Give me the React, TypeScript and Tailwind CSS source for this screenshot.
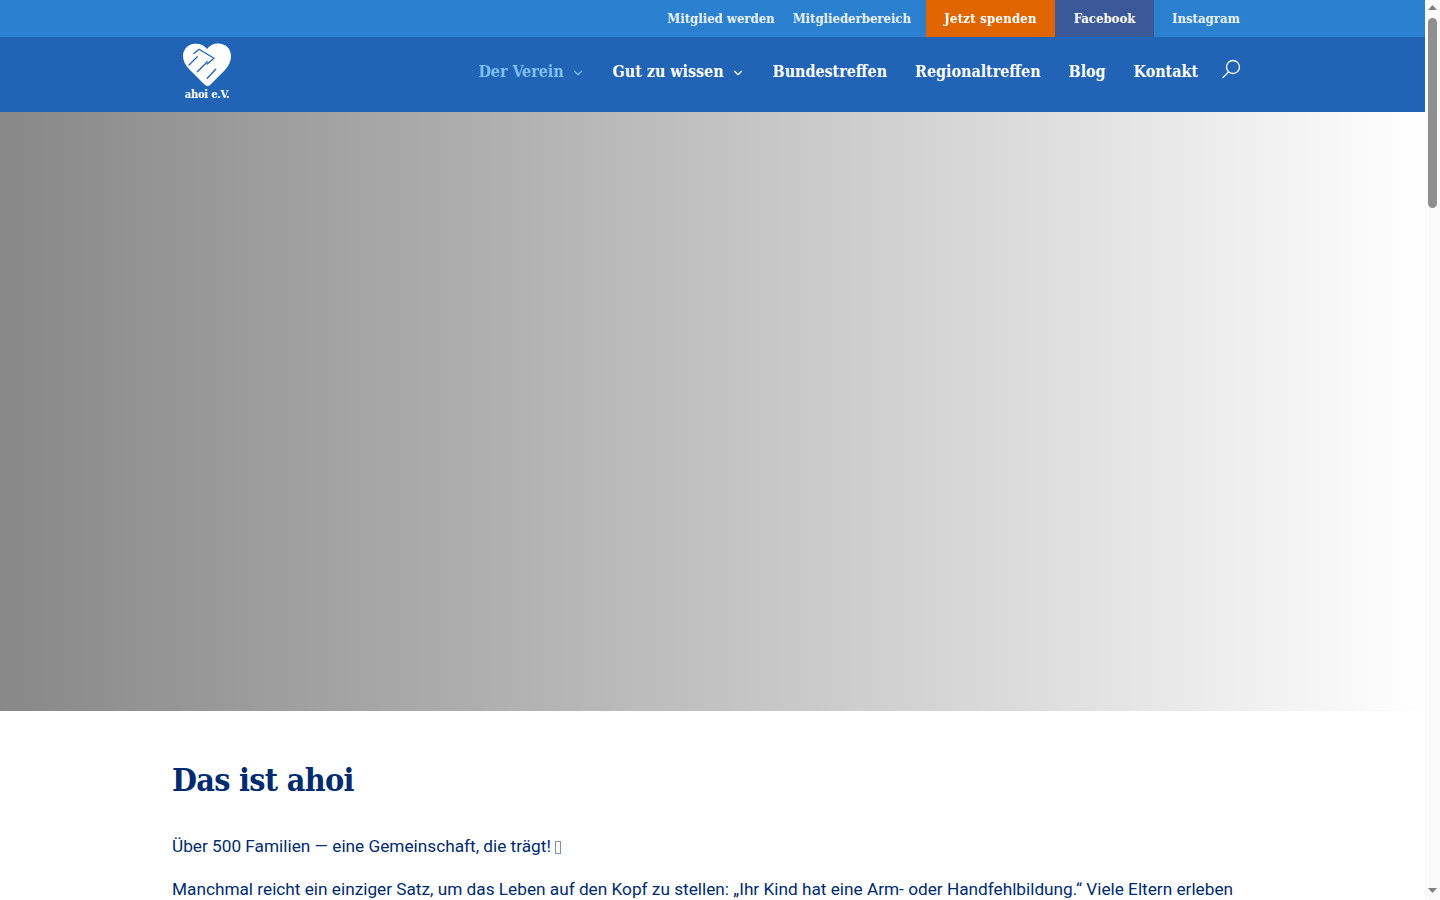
import { ChevronDown } from 'lucide-react'

const SLAB = "font-['DejaVu_Serif_Condensed','Liberation_Serif',serif]"

function Logo() {
  return (
    <div className="flex flex-col items-center w-[70px]">
      <svg viewBox="0 0 48 44" className="w-[48px] h-[44px]">
        <path
          fill="#fff"
          d="M24 6C21 1.500 15 0 9.500 1 3.500 2.500 0 7.500 0 13c0 5 2.500 9 6 13l15 15c2 2 4 3 6 1l14-14c4-4 7-9 7-15C48 6 43 1 36 .5 31 0 27 2 24 6z"
        />
        <g fill="none" stroke="#2163b5" strokeWidth="1.300" strokeLinecap="round" strokeLinejoin="round">
          <path d="M11 10.500l5-4.200 15 9-6.700 5.700" />
          <path d="M6 22l8.300-8.300" />
          <path d="M14.300 28.700l10-10" />
          <path d="M24.300 35.300l8.400-9" />
        </g>
      </svg>
      <span className={`${SLAB} mt-[1px] text-[11px] leading-[13px] text-white font-bold tracking-[-0.2px]`}>ahoi e.V.</span>
    </div>
  )
}

function TopLink({ label }: { label: string }) {
  return <a className="px-[9px] text-white/90 font-semibold">{label}</a>
}

function NavItem({ label, active, menu }: { label: string; active?: boolean; menu?: boolean }) {
  return (
    <a className={`flex items-center gap-[7px] ${active ? 'text-[#80c0f4]' : 'text-white'}`}>
      {label}
      {menu && <ChevronDown size={14} strokeWidth={2} className="mt-[1px]" />}
    </a>
  )
}

function Scrollbar() {
  return (
    <div className="w-[15px] h-full bg-[#fbfbfb] flex flex-col items-center">
      <svg viewBox="0 0 9 5" className="w-[9px] h-[5px] mt-[5px] shrink-0" fill="#7f7f7f">
        <path d="M4.500 0L9 5H0z" />
      </svg>
      <div className="w-[9px] h-[190px] mt-[8px] rounded-[5px] bg-[#8f8f8f]" />
      <svg viewBox="0 0 9 5" className="w-[9px] h-[5px] mt-auto mb-[7px] shrink-0" fill="#7f7f7f">
        <path d="M0 0h9L4.500 5z" />
      </svg>
    </div>
  )
}

export default function App() {
  return (
    <div className="h-[900px] flex overflow-hidden bg-white">
      <div className="flex-1 min-w-0">
        {/* Top bar */}
        <div className={`${SLAB} h-[37px] bg-[#2b80cf] flex items-center justify-end pr-[185px] text-[13px]`}>
          <TopLink label="Mitglied werden" />
          <TopLink label="Mitgliederbereich" />
          <a className="h-[37px] w-[129px] ml-[6px] flex items-center justify-center bg-[#e06500] text-white font-semibold tracking-[0.25px]">Jetzt spenden</a>
          <a className="h-[37px] w-[99px] flex items-center justify-center bg-[#3b5998] text-white font-semibold">Facebook</a>
          <a className="w-[86px] pl-[18px] text-white/90 font-semibold">Instagram</a>
        </div>

        {/* Main nav */}
        <div className="h-[75px] bg-[#2163b5] pl-[172px] pr-[185px] flex items-start justify-between">
          <div className="pt-[6px]"><Logo /></div>
          <nav className={`${SLAB} flex items-center gap-[28px] pt-[23px] text-[15.9px] font-semibold leading-[24px]`}>
            <NavItem label="Der Verein" active menu />
            <NavItem label="Gut zu wissen" menu />
            <NavItem label="Bundestreffen" />
            <NavItem label="Regionaltreffen" />
            <NavItem label="Blog" />
            <NavItem label="Kontakt" />
            <svg viewBox="0 0 20 20" className="w-[20px] h-[20px] -mt-[7px] -ml-[5px] -mr-[1px]" fill="none" stroke="#fff" strokeWidth="1.300">
              <circle cx="12" cy="8" r="6.500" />
              <path d="M7.500 13l-5.500 5.500" strokeLinecap="round" />
            </svg>
          </nav>
        </div>

        {/* Hero */}
        <div className="h-[599px] bg-gradient-to-r from-[#888888] to-white" />

        {/* Intro */}
        <div className="pl-[172px] pr-[185px] pt-[45px] text-[#002b6f]">
          <h1 className={`${SLAB} text-[32px] leading-[48px] font-bold tracking-[-0.7px]`}>Das ist ahoi</h1>
          <p className="mt-[29px] font-['Roboto',sans-serif] text-[17.23px] leading-[26px]">
            Über 500 Familien — eine Gemeinschaft, die trägt!
            {/* the emoji has no glyph in the reference, only an empty box */}
            <span className="inline-block w-[6px] h-[13px] ml-[4px] align-[-2px] border border-[#7f8fb0]" />
          </p>
          <p className="mt-[17px] font-['Roboto',sans-serif] text-[17.23px] leading-[26px] whitespace-nowrap">
            Manchmal reicht ein einziger Satz, um das Leben auf den Kopf zu stellen: „Ihr Kind hat eine Arm- oder Handfehlbildung.“ Viele Eltern erleben
          </p>
        </div>
      </div>
      <Scrollbar />
    </div>
  )
}
